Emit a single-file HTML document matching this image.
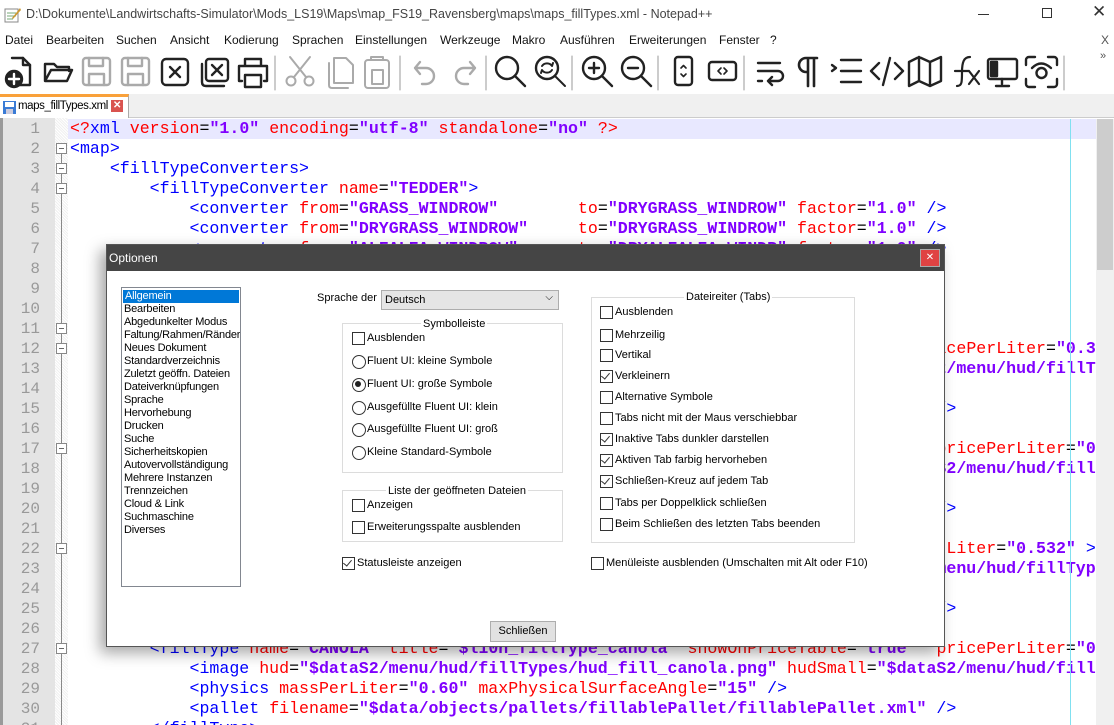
<!DOCTYPE html>
<html><head><meta charset="utf-8">
<style>
*{margin:0;padding:0;box-sizing:border-box}
html,body{width:1114px;height:725px;overflow:hidden}
body{background:#fff;font-family:"Liberation Sans",sans-serif;position:relative}
.abs{position:absolute}
#title{left:0;top:0;width:1114px;height:30px;background:#fff}
#title .t{left:26px;top:7px;font-size:12.5px;color:#444;white-space:nowrap}
#menu{left:0;top:30px;width:1114px;height:20px;font-size:12px;color:#111}
#menu span{position:absolute;top:3px}
#tabs{left:0;top:94px;width:1114px;height:24px;background:#f0f0f0;border-bottom:1px solid #ccc}
#tab{left:0;top:94px;width:129px;height:24px;background:#fff;border-top:3px solid #f9a13a;border-right:1px solid #aaa;font-size:11.5px;letter-spacing:-0.4px}
#gutter{left:0;top:118px;width:55px;height:607px;background:#e4e4e4;border-left:3px solid #9a9a9a}
#fold{left:55px;top:118px;width:13px;height:607px;background:repeating-linear-gradient(45deg,#f0f0f0 0 1px,#fff 1px 2px)}
#code{left:0;top:119px;width:1096px;height:606px;overflow:hidden;font-family:"Liberation Mono",monospace;font-size:16.6px}
.ln{height:20px;line-height:20px;position:relative;white-space:nowrap}
.ln .n{position:absolute;left:0;width:40px;text-align:right;color:#999;font-size:16px}
.ln .c{position:absolute;left:70px;color:#000;white-space:pre}
.b{color:#0000ff}.r{color:#ff0000}.v{color:#8000ff;font-weight:bold}
.fb{position:absolute;left:56px;top:4px;width:11px;height:11px;border:1px solid #888;background:#fff}
.fb:after{content:"";position:absolute;left:2px;top:4px;width:5px;height:1px;background:#666}
#dlg{left:106px;top:244px;width:839px;height:403px;background:#fff;border:1px solid #555;box-shadow:-6px 6px 14px rgba(0,0,0,.35);font-size:11.2px;color:#000}
#dlg .tb{position:absolute;left:0;top:0;width:100%;height:26px;background:#454545;color:#fff;font-size:12px;padding:6px 0 0 2px}
#dlg .x{position:absolute;right:4px;top:4px;width:20px;height:18px;background:#e04343;border:1px solid #aaa;color:#fff;font-size:10px;text-align:center;line-height:16px}
.lst{position:absolute;left:14px;top:42px;width:120px;height:300px;border:1px solid #828790;background:#fff;padding-top:2px}
.lst div{height:13px;line-height:13px;padding-left:2px;white-space:nowrap;overflow:hidden;font-size:11px;letter-spacing:-0.2px}
.lst .sel{background:#0078d7;color:#fff;margin:0 1px}
.grp{position:absolute;border:1px solid #dcdcdc}
.gt{position:absolute;background:#fff;padding:0 2px;font-size:11px;white-space:nowrap}
.it{position:absolute;white-space:nowrap;font-size:11px;line-height:13px;padding-left:15px}
.it:before{content:"";position:absolute;left:0;top:0;width:11px;height:11px;border:1px solid #333;background:#fff}
.it.k:after{content:"";position:absolute;left:3px;top:1px;width:4px;height:7px;border:solid #333;border-width:0 1px 1px 0;transform:rotate(40deg)}
.it.o:before{border-radius:50%;width:12px;height:12px}
.it.os:after{content:"";position:absolute;left:3px;top:3px;width:6px;height:6px;border-radius:50%;background:#222}
</style></head><body>

<div id="title" class="abs">
<svg class="abs" style="left:4px;top:6px" width="18" height="18"><rect x="1" y="3" width="13" height="13" fill="#fff" stroke="#888"/><path d="M3 7h9M3 10h9M3 13h6" stroke="#7a7"/><path d="M8 12l8-10 1 2-8 9z" fill="#c93"/></svg>
<div class="abs t">D:\Dokumente\Landwirtschafts-Simulator\Mods_LS19\Maps\map_FS19_Ravensberg\maps\maps_fillTypes.xml - Notepad++</div>
<div class="abs" style="left:978px;top:14px;width:11px;height:1px;background:#333"></div>
<div class="abs" style="left:1042px;top:8px;width:10px;height:10px;border:1px solid #333"></div>
<div class="abs" style="left:1092px;top:2px;font-size:17px;color:#333">✕</div>
</div>

<div id="menu" class="abs">
<span style="left:5px">Datei</span><span style="left:46px">Bearbeiten</span><span style="left:116px">Suchen</span><span style="left:170px">Ansicht</span><span style="left:224px">Kodierung</span><span style="left:292px">Sprachen</span><span style="left:355px">Einstellungen</span><span style="left:440px">Werkzeuge</span><span style="left:512px">Makro</span><span style="left:560px">Ausführen</span><span style="left:629px">Erweiterungen</span><span style="left:719px">Fenster</span><span style="left:770px">?</span><span style="left:1101px;color:#555">X</span>
</div>

<svg class="abs" style="left:0;top:50px" width="1114" height="44" fill="none" stroke="#222" stroke-width="2.4" stroke-linecap="round" stroke-linejoin="round">
<g transform="translate(4,4)"><path d="M8 4h11l7 7v20H14"/><path d="M19 4v7h7"/><circle cx="10" cy="25" r="8" fill="#222"/><path d="M10 20v10M5 25h10" stroke="#fff"/></g>
<g transform="translate(43,4)"><path d="M2 10h9l3 3h12v4M2 10v17h22l5-11H8l-6 11"/></g>
<g stroke="#aaa"><g transform="translate(82,4)"><rect x="1" y="4" width="27" height="27" rx="3"/><path d="M7 4v8h14V4M7 31v-11h15v11"/></g>
<g transform="translate(121,4)"><rect x="1" y="4" width="27" height="27" rx="3"/><path d="M7 4v8h14V4M7 31v-11h15v11"/></g></g>
<g transform="translate(161,4)"><rect x="1" y="5" width="26" height="26" rx="4"/><path d="M9 13l10 10M19 13l-10 10"/></g>
<g transform="translate(201,4)"><rect x="5" y="5" width="22" height="22" rx="3"/><path d="M11 11l10 10M21 11l-10 10M1 10v18q0 4 4 4h18"/></g>
<g transform="translate(237,4)"><path d="M8 12V5h16v7M5 27H2V12h28v15h-3M8 21h16v12H8z"/></g>
<line x1="275" y1="6" x2="275" y2="40" stroke="#999" stroke-width="1"/>
<g stroke="#aaa" stroke-width="2"><g transform="translate(286,4)"><circle cx="5" cy="27" r="4.5"/><circle cx="23" cy="27" r="4.5"/><path d="M8 23L24 3M20 23L4 3"/></g>
<g transform="translate(326,4)"><path d="M8 4h12l7 7v18H8z"/><path d="M3 9v22q0 3 3 3h16"/></g>
<g transform="translate(364,4)"><rect x="1" y="6" width="24" height="28" rx="3"/><path d="M7 6V3h12v3M8 16h11v14H8z"/></g></g>
<line x1="400" y1="6" x2="400" y2="40" stroke="#999" stroke-width="1"/>
<g stroke="#aaa"><g transform="translate(412,4)"><path d="M8 8l-5 6 5 6M3 14h11a8 8 0 0 1 0 16h-4"/></g>
<g transform="translate(452,4)"><path d="M18 8l5 6-5 6M23 14H12a8 8 0 0 0 0 16h4"/></g></g>
<line x1="486" y1="6" x2="486" y2="40" stroke="#999" stroke-width="1"/>
<g transform="translate(495,4)"><circle cx="12" cy="14" r="11"/><path d="M20 22l10 10"/></g>
<g transform="translate(535,4)"><circle cx="12" cy="14" r="11"/><path d="M20 22l10 10M7 12a6 6 0 0 1 10 0l1-3M17 16a6 6 0 0 1-10 0l-1 3" stroke-width="2"/></g>
<line x1="572" y1="6" x2="572" y2="40" stroke="#999" stroke-width="1"/>
<g transform="translate(582,4)"><circle cx="12" cy="14" r="11"/><path d="M20 22l10 10M7 14h10M12 9v10"/></g>
<g transform="translate(621,4)"><circle cx="12" cy="14" r="11"/><path d="M20 22l10 10M7 14h10"/></g>
<line x1="658" y1="6" x2="658" y2="40" stroke="#999" stroke-width="1"/>
<g transform="translate(674,4)"><rect x="1" y="3" width="17" height="28" rx="3"/><path d="M7 14l2.5-2.5 2.5 2.5M7 20l2.5 2.5 2.5-2.5" stroke-width="1.6"/></g>
<g transform="translate(708,4)"><rect x="1" y="8" width="27" height="18" rx="3"/><path d="M13 14l-3 3 3 3M16 14l3 3-3 3" stroke-width="1.6"/></g>
<line x1="744" y1="6" x2="744" y2="40" stroke="#999" stroke-width="1"/>
<g transform="translate(756,4)"><path d="M2 9h22M2 17h20a5 5 0 0 1 0 10h-9M16 23l-4 4 4 4M2 27h4"/></g>
<g transform="translate(798,4)"><path d="M10 4v28M16 4v28M10 4H8a7 7 0 0 0 0 14h2M10 4h9" stroke-width="2.6"/></g>
<g transform="translate(831,4)"><path d="M1 11l4 3-4 3M10 6h20M10 17h20M10 28h20"/></g>
<g transform="translate(870,4)"><path d="M9 9L1 17l8 8M25 9l8 8-8 8M20 4L13 31"/></g>
<g transform="translate(908,4)"><path d="M1 8l10-5 11 5 11-5v24l-11 5-11-5-10 5zM11 3v24M22 8v24"/></g>
<g transform="translate(954,4)"><path d="M3 32c5 0 5-4 5-14s2-15 8-15M1 17h14M15 17l10 13M25 17l-10 13" stroke-width="2.2"/></g>
<g transform="translate(987,4)"><rect x="1" y="5" width="29" height="20" rx="2"/><rect x="4" y="8" width="6" height="14" fill="#222"/><path d="M15 25v5M9 32h13"/></g>
<g transform="translate(1025,4)"><path d="M1 11V6a3 3 0 0 1 3-3h6M23 3h6a3 3 0 0 1 3 3v5M32 25v5a3 3 0 0 1-3 3h-6M10 33H4a3 3 0 0 1-3-3v-5"/><circle cx="16.5" cy="19" r="5"/><path d="M7 14q9-9 19 0"/></g>
<line x1="1064" y1="6" x2="1064" y2="40" stroke="#999" stroke-width="1"/>
<text x="1100" y="9" font-size="11" fill="#555" stroke="none" font-family="Liberation Sans">»</text>
</svg>

<div id="tabs" class="abs"></div>
<div id="tab" class="abs">
<svg class="abs" style="left:3px;top:4px" width="13" height="13"><rect x="0" y="0" width="13" height="13" fill="#3a7bd5"/><rect x="2" y="1" width="9" height="5" fill="#fff"/><rect x="3" y="8" width="7" height="5" fill="#ccd"/></svg>
<span class="abs" style="left:18px;top:3px">maps_fillTypes.xml</span>
<span class="abs" style="left:111px;top:3px;width:12px;height:12px;background:#d9534f;color:#fff;font-size:10px;line-height:12px;text-align:center;font-weight:bold">✕</span>
</div>

<div id="gutter" class="abs"></div>
<div id="fold" class="abs"></div>
<div class="abs" style="left:61px;top:150px;width:1px;height:575px;background:#888"></div>
<div class="abs" style="left:68px;top:119px;width:1028px;height:20px;background:#e8e8ff"></div>

<div id="code" class="abs"><div class="ln"><span class="n">1</span><span class="c"><span class="r">&lt;?</span><span class="b">xml</span> <span class="r">version</span>=<span class="v">"1.0"</span> <span class="r">encoding</span>=<span class="v">"utf-8"</span> <span class="r">standalone</span>=<span class="v">"no"</span> <span class="r">?&gt;</span></span></div><div class="ln"><span class="n">2</span><span class="fb"></span><span class="c"><span class="b">&lt;map&gt;</span></span></div><div class="ln"><span class="n">3</span><span class="fb"></span><span class="c">    <span class="b">&lt;fillTypeConverters&gt;</span></span></div><div class="ln"><span class="n">4</span><span class="fb"></span><span class="c">        <span class="b">&lt;fillTypeConverter</span> <span class="r">name</span>=<span class="v">"TEDDER"</span><span class="b">&gt;</span></span></div><div class="ln"><span class="n">5</span><span class="c">            <span class="b">&lt;converter</span> <span class="r">from</span>=<span class="v">"GRASS_WINDROW"</span>        <span class="r">to</span>=<span class="v">"DRYGRASS_WINDROW"</span> <span class="r">factor</span>=<span class="v">"1.0"</span> <span class="b">/&gt;</span></span></div><div class="ln"><span class="n">6</span><span class="c">            <span class="b">&lt;converter</span> <span class="r">from</span>=<span class="v">"DRYGRASS_WINDROW"</span>     <span class="r">to</span>=<span class="v">"DRYGRASS_WINDROW"</span> <span class="r">factor</span>=<span class="v">"1.0"</span> <span class="b">/&gt;</span></span></div><div class="ln"><span class="n">7</span><span class="c">            <span class="b">&lt;converter</span> <span class="r">from</span>=<span class="v">"ALFALFA_WINDROW"</span>      <span class="r">to</span>=<span class="v">"DRYALFALFA_WINDR"</span> <span class="r">factor</span>=<span class="v">"1.0"</span> <span class="b">/&gt;</span></span></div><div class="ln"><span class="n">8</span><span class="c">        <span class="b">&lt;/fillTypeConverter&gt;</span></span></div><div class="ln"><span class="n">9</span><span class="c">    <span class="b">&lt;/fillTypeConverters&gt;</span></span></div><div class="ln"><span class="n">10</span><span class="c"></span></div><div class="ln"><span class="n">11</span><span class="fb"></span><span class="c">    <span class="b">&lt;fillTypes&gt;</span></span></div><div class="ln"><span class="n">12</span><span class="fb"></span><span class="c">        <span class="b">&lt;fillType</span> <span class="r">name</span>=<span class="v">"WHEAT"</span> <span class="r">title</span>=<span class="v">"$l10n_fillType_barley"</span> <span class="r">showOnPriceTable</span>=<span class="v">"true"</span> <span class="r">pricePerLiter</span>=<span class="v">"0.33"</span> <span class="b">&gt;</span></span></div><div class="ln"><span class="n">13</span><span class="c">            <span class="b">&lt;image</span> <span class="r">hud</span>=<span class="v">"$dataS2/menu/hud/fillTypes/hud_fill_wheat.png"</span> <span class="r">hudSmall</span>=<span class="v">"$dataS2/menu/hud/fillTypes/hud_fill_wheat_sml.png"</span></span></div><div class="ln"><span class="n">14</span><span class="c">            <span class="b">&lt;physics</span> <span class="r">massPerLiter</span>=<span class="v">"0.60"</span> <span class="r">maxPhysicalSurfaceAngle</span>=<span class="v">"15"</span> <span class="b">/&gt;</span></span></div><div class="ln"><span class="n">15</span><span class="c">            <span class="b">&lt;pallet</span> <span class="r">filename</span>=<span class="v">"$data/objects/pallets/fillablePallet/fillablePallet.xml"</span> <span class="b">/&gt;</span></span></div><div class="ln"><span class="n">16</span><span class="c">        <span class="b">&lt;/fillType&gt;</span></span></div><div class="ln"><span class="n">17</span><span class="fb"></span><span class="c">        <span class="b">&lt;fillType</span> <span class="r">name</span>=<span class="v">"BARLEY"</span> <span class="r">title</span>=<span class="v">"$l10n_fillType_sorghum"</span> <span class="r">showOnPriceTable</span>=<span class="v">"true"</span> <span class="r">pricePerLiter</span>=<span class="v">"0.4"</span> <span class="b">&gt;</span></span></div><div class="ln"><span class="n">18</span><span class="c">            <span class="b">&lt;image</span> <span class="r">hud</span>=<span class="v">"$dataS2/menu/hud/fillTypes/hud_fill_sorghu.png"</span> <span class="r">hudSmall</span>=<span class="v">"$dataS2/menu/hud/fillTypes/hud_fill_sorghum_sml.png"</span></span></div><div class="ln"><span class="n">19</span><span class="c">            <span class="b">&lt;physics</span> <span class="r">massPerLiter</span>=<span class="v">"0.60"</span> <span class="r">maxPhysicalSurfaceAngle</span>=<span class="v">"15"</span> <span class="b">/&gt;</span></span></div><div class="ln"><span class="n">20</span><span class="c">            <span class="b">&lt;pallet</span> <span class="r">filename</span>=<span class="v">"$data/objects/pallets/fillablePallet/fillablePallet.xml"</span> <span class="b">/&gt;</span></span></div><div class="ln"><span class="n">21</span><span class="c">        <span class="b">&lt;/fillType&gt;</span></span></div><div class="ln"><span class="n">22</span><span class="fb"></span><span class="c">        <span class="b">&lt;fillType</span> <span class="r">name</span>=<span class="v">"OAT"</span> <span class="r">title</span>=<span class="v">"$l10n_fillType_oat"</span> <span class="r">showOnPriceTable</span>=<span class="v">"true"</span> <span class="r">pricePerLiter</span>=<span class="v">"0.532"</span> <span class="b">&gt;</span></span></div><div class="ln"><span class="n">23</span><span class="c">            <span class="b">&lt;image</span> <span class="r">hud</span>=<span class="v">"$dataS2/menu/hud/fillTypes/hud_fill_oat.png"</span> <span class="r">hudSmall</span>=<span class="v">"$dataS2/menu/hud/fillTypes/hud_fill_oat_sml.png"</span></span></div><div class="ln"><span class="n">24</span><span class="c">            <span class="b">&lt;physics</span> <span class="r">massPerLiter</span>=<span class="v">"0.60"</span> <span class="r">maxPhysicalSurfaceAngle</span>=<span class="v">"15"</span> <span class="b">/&gt;</span></span></div><div class="ln"><span class="n">25</span><span class="c">            <span class="b">&lt;pallet</span> <span class="r">filename</span>=<span class="v">"$data/objects/pallets/fillablePallet/fillablePallet.xml"</span> <span class="b">/&gt;</span></span></div><div class="ln"><span class="n">26</span><span class="c">        <span class="b">&lt;/fillType&gt;</span></span></div><div class="ln"><span class="n">27</span><span class="fb"></span><span class="c">        <span class="b">&lt;fillType</span> <span class="r">name</span>=<span class="v">"CANOLA"</span> <span class="r">title</span>=<span class="v">"$l10n_fillType_canola"</span> <span class="r">showOnPriceTable</span>=<span class="v">"true"</span>  <span class="r">pricePerLiter</span>=<span class="v">"0.6"</span> <span class="b">&gt;</span></span></div><div class="ln"><span class="n">28</span><span class="c">            <span class="b">&lt;image</span> <span class="r">hud</span>=<span class="v">"$dataS2/menu/hud/fillTypes/hud_fill_canola.png"</span> <span class="r">hudSmall</span>=<span class="v">"$dataS2/menu/hud/fillTypes/hud_fill_canola_sml.png"</span></span></div><div class="ln"><span class="n">29</span><span class="c">            <span class="b">&lt;physics</span> <span class="r">massPerLiter</span>=<span class="v">"0.60"</span> <span class="r">maxPhysicalSurfaceAngle</span>=<span class="v">"15"</span> <span class="b">/&gt;</span></span></div><div class="ln"><span class="n">30</span><span class="c">            <span class="b">&lt;pallet</span> <span class="r">filename</span>=<span class="v">"$data/objects/pallets/fillablePallet/fillablePallet.xml"</span> <span class="b">/&gt;</span></span></div><div class="ln"><span class="n">31</span><span class="c">        <span class="b">&lt;/fillType&gt;</span></span></div></div>
<div class="abs" style="left:1070px;top:119px;width:1px;height:606px;background:#80e0f0"></div>
<div class="abs" style="left:1096px;top:119px;width:18px;height:606px;background:#f0f0f0"></div>
<div class="abs" style="left:1097px;top:119px;width:16px;height:151px;background:#cdcdcd"></div>

<div id="dlg" class="abs">
<div class="tb">Optionen</div>
<div class="x">✕</div>
<div class="lst">
<div class="sel">Allgemein</div><div>Bearbeiten</div><div>Abgedunkelter Modus</div><div>Faltung/Rahmen/Ränder</div><div>Neues Dokument</div><div>Standardverzeichnis</div><div>Zuletzt geöffn. Dateien</div><div>Dateiverknüpfungen</div><div>Sprache</div><div>Hervorhebung</div><div>Drucken</div><div>Suche</div><div>Sicherheitskopien</div><div>Autovervollständigung</div><div>Mehrere Instanzen</div><div>Trennzeichen</div><div>Cloud &amp; Link</div><div>Suchmaschine</div><div>Diverses</div>
</div>
<div class="abs" style="left:210px;top:47px;font-size:11px">Sprache der</div>
<div class="abs" style="left:274px;top:45px;width:178px;height:20px;background:#e5e5e5;border:1px solid #adadad;font-size:11px;padding:3px 0 0 3px">Deutsch<span style="position:absolute;right:5px;top:1px;font-size:10px">⌵</span></div>

<div class="grp" style="left:235px;top:78px;width:221px;height:150px"></div>
<div class="gt" style="left:314px;top:73px">Symbolleiste</div>
<div class="it" style="left:245px;top:87px">Ausblenden</div>
<div class="it o" style="left:245px;top:110px">Fluent UI: kleine Symbole</div>
<div class="it o os" style="left:245px;top:133px">Fluent UI: große Symbole</div>
<div class="it o" style="left:245px;top:156px">Ausgefüllte Fluent UI: klein</div>
<div class="it o" style="left:245px;top:178px">Ausgefüllte Fluent UI: groß</div>
<div class="it o" style="left:245px;top:201px">Kleine Standard-Symbole</div>

<div class="grp" style="left:235px;top:245px;width:221px;height:52px"></div>
<div class="gt" style="left:279px;top:240px">Liste der geöffneten Dateien</div>
<div class="it" style="left:245px;top:254px">Anzeigen</div>
<div class="it" style="left:245px;top:276px">Erweiterungsspalte ausblenden</div>
<div class="it k" style="left:235px;top:312px">Statusleiste anzeigen</div>

<div class="grp" style="left:484px;top:52px;width:264px;height:246px"></div>
<div class="gt" style="left:577px;top:46px">Dateireiter (Tabs)</div>
<div class="it" style="left:493px;top:61px">Ausblenden</div>
<div class="it" style="left:493px;top:84px">Mehrzeilig</div>
<div class="it" style="left:493px;top:104px">Vertikal</div>
<div class="it k" style="left:493px;top:125px">Verkleinern</div>
<div class="it" style="left:493px;top:146px">Alternative Symbole</div>
<div class="it" style="left:493px;top:167px">Tabs nicht mit der Maus verschiebbar</div>
<div class="it k" style="left:493px;top:188px">Inaktive Tabs dunkler darstellen</div>
<div class="it k" style="left:493px;top:209px">Aktiven Tab farbig hervorheben</div>
<div class="it k" style="left:493px;top:230px">Schließen-Kreuz auf jedem Tab</div>
<div class="it" style="left:493px;top:252px">Tabs per Doppelklick schließen</div>
<div class="it" style="left:493px;top:273px">Beim Schließen des letzten Tabs beenden</div>
<div class="it" style="left:484px;top:312px">Menüleiste ausblenden (Umschalten mit Alt oder F10)</div>

<div class="abs" style="left:383px;top:376px;width:66px;height:21px;background:#e1e1e1;border:1px solid #adadad;font-size:11px;text-align:center;line-height:19px">Schließen</div>
</div>
</body></html>
